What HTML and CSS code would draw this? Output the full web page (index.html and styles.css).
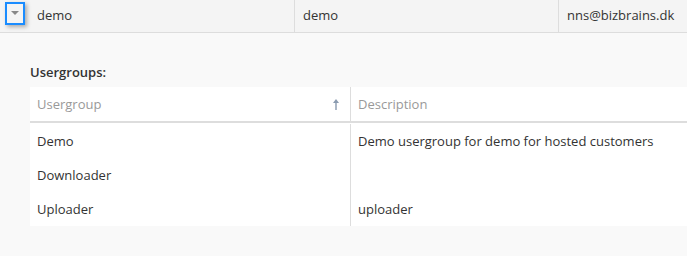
FILE: index.html
```html
<!DOCTYPE html>
<html lang="en">
<head>
    <meta charset="UTF-8">
    <title>Users</title>
    <link rel="stylesheet" href="styles.css">
</head>
<body>
    <div class="master-row">
        <div class="cell cell-name">
            <button class="expand-btn" aria-label="Collapse">
                <svg width="8" height="4" viewBox="0 0 8 4"><path d="M0 0h8L4 4z" fill="#888"/></svg>
            </button>
            <span>demo</span>
        </div>
        <div class="cell cell-login">demo</div>
        <div class="cell cell-mail">nns@bizbrains.dk</div>
    </div>

    <div class="detail">
        <div class="detail-title">Usergroups:</div>
        <div class="grid">
            <div class="grid-head">
                <div class="gcell col-group">
                    <span>Usergroup</span>
                    <svg class="sort" width="6" height="11" viewBox="0 0 6 11"><path d="M3 0L0 4h2.3v7h1.4V4H6z" fill="#8a9bb0"/></svg>
                </div>
                <div class="gcell col-desc">Description</div>
            </div>
            <div class="grid-body">
                <div class="grow">
                    <div class="gcell col-group">Demo</div>
                    <div class="gcell col-desc">Demo usergroup for demo for hosted customers</div>
                </div>
                <div class="grow">
                    <div class="gcell col-group">Downloader</div>
                    <div class="gcell col-desc"></div>
                </div>
                <div class="grow">
                    <div class="gcell col-group">Uploader</div>
                    <div class="gcell col-desc">uploader</div>
                </div>
            </div>
        </div>
    </div>
</body>
</html>
```

FILE: styles.css
```css
* {
    margin: 0;
    padding: 0;
    box-sizing: border-box;
}
body {
    font-family: 'Open Sans', sans-serif;
    font-size: 13px;
    color: #333;
    background-color: #f9f9f9;
    overflow: hidden;
}
.master-row {
    display: flex;
    height: 33px;
    background-color: #f4f4f4;
    border-bottom: 1px solid #ddd;
}
.cell {
    display: flex;
    align-items: center;
    padding: 0 8px 2px;
    border-left: 1px solid #ddd;
    white-space: nowrap;
}
.cell-name {
    width: 294px;
    border-left: none;
    padding-left: 5px;
    gap: 12px;
}
.cell-login {
    width: 264px;
}
.cell-mail {
    flex: 1;
    min-width: 0;
}
.expand-btn {
    width: 20px;
    height: 23px;
    margin-top: -4px;
    border: 2px solid #1a8cff;
    background-color: #f4f4f4;
    box-shadow: 2px 2px 4px rgba(0,0,0,0.3);
    display: flex;
    align-items: center;
    justify-content: center;
    cursor: pointer;
}
.detail {
    padding: 31px 0 0 30px;
}
.detail-title {
    font-weight: 600;
    color: #333;
    margin-bottom: 6px;
    line-height: 17px;
}
.grid {
    background-color: #fff;
}
.grid-head {
    display: flex;
    height: 36px;
    border-bottom: 2px solid #ddd;
}
.grid-head .gcell {
    color: #999;
}
.grid-body {
    padding-top: 1px;
}
.grow {
    display: flex;
    height: 34px;
}
.gcell {
    display: flex;
    align-items: center;
    padding: 0 7px;
    white-space: nowrap;
}
.col-group {
    width: 320px;
    flex-shrink: 0;
    justify-content: space-between;
    padding-right: 11px;
}
.col-desc {
    flex: 1;
    min-width: 0;
    border-left: 1px solid #ddd;
}
```
